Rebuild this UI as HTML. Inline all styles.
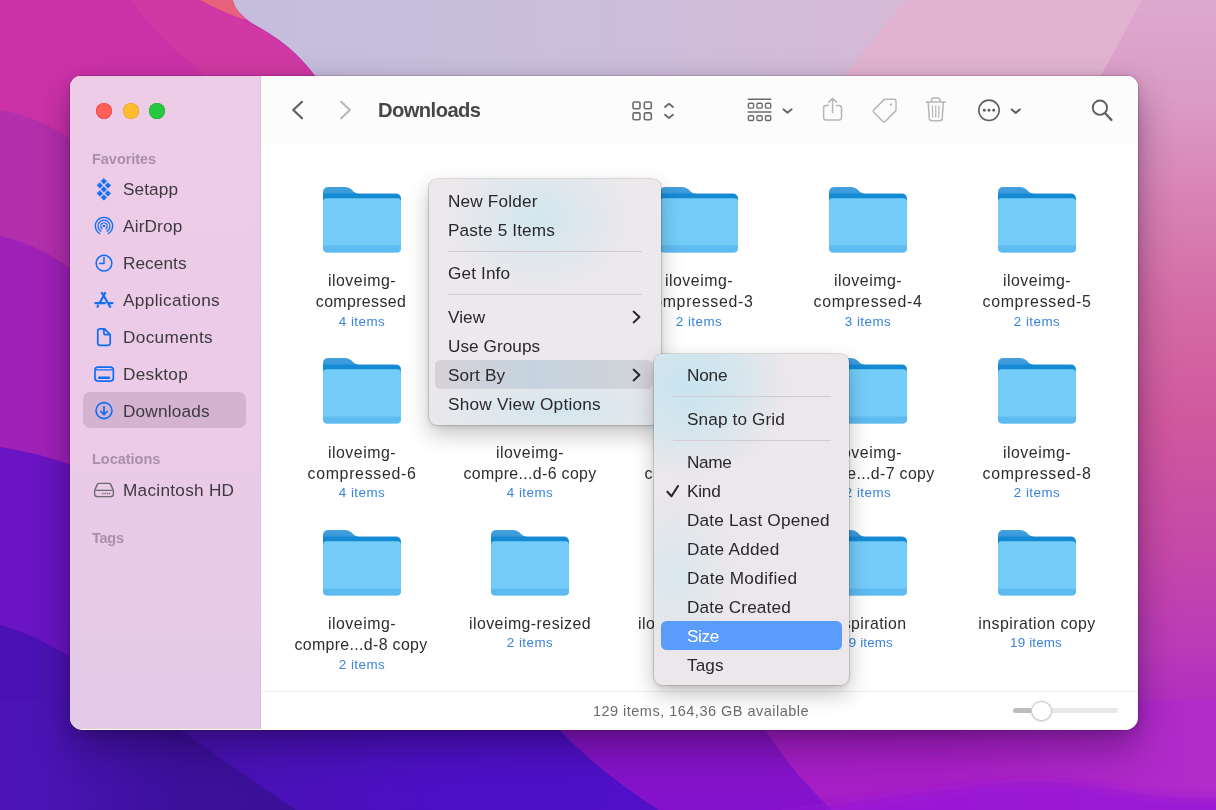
<!DOCTYPE html>
<html><head><meta charset="utf-8"><title>Downloads</title>
<style>
html,body{margin:0;padding:0;width:1216px;height:810px;overflow:hidden}
body{width:1216px;height:810px;overflow:hidden;position:relative;background:#8a1fb5;font-family:"Liberation Sans", sans-serif}
.t{position:absolute;white-space:nowrap;font-family:"Liberation Sans", sans-serif;will-change:transform}
.abs{position:absolute}
svg{position:absolute;overflow:visible}
</style></head><body>
<svg style="left:0;top:0;overflow:hidden" width="1216" height="810" viewBox="0 0 1216 810">
<defs>
<linearGradient id="gR" x1="0" y1="0" x2="0" y2="1">
<stop offset="0" stop-color="#dda9ce"/><stop offset=".12" stop-color="#db9cc6"/><stop offset=".25" stop-color="#d882b4"/><stop offset=".38" stop-color="#d46ba6"/><stop offset=".52" stop-color="#d0589e"/><stop offset=".68" stop-color="#c648a8"/><stop offset=".80" stop-color="#ba3ab8"/><stop offset=".90" stop-color="#ad28c4"/><stop offset="1" stop-color="#a41fca"/>
</linearGradient>
<linearGradient id="gLav" x1="0" y1="0" x2="1" y2="0"><stop offset="0" stop-color="#c4bddd"/><stop offset=".45" stop-color="#c9bfdc"/><stop offset="1" stop-color="#d6bad6"/></linearGradient>
<linearGradient id="gPur" x1="0" y1="0" x2="1" y2="0"><stop offset="0" stop-color="#a21cc4"/><stop offset=".6" stop-color="#a81fc6"/><stop offset="1" stop-color="#b22dca"/></linearGradient>
<linearGradient id="gVio" x1="0" y1="0" x2="0" y2="1"><stop offset="0" stop-color="#8a17b6"/><stop offset=".45" stop-color="#8614c6"/><stop offset="1" stop-color="#8412cc"/></linearGradient>
<linearGradient id="gInd" x1="0" y1="0" x2="1" y2="0"><stop offset="0" stop-color="#4c14b6"/><stop offset=".3" stop-color="#4812b2"/><stop offset=".6" stop-color="#4c10c4"/><stop offset="1" stop-color="#5010c8"/></linearGradient>
<linearGradient id="gDk" x1="0" y1="0" x2="1" y2="0"><stop offset="0" stop-color="#3a1098" stop-opacity="0"/><stop offset=".55" stop-color="#3a1098" stop-opacity=".9"/><stop offset="1" stop-color="#3a1098"/></linearGradient>
<filter id="bl" x="-10%" y="-50%" width="120%" height="200%"><feGaussianBlur stdDeviation="5"/></filter>
</defs>
<rect width="1216" height="810" fill="url(#gR)"/>
<path d="M906 0H1142L1101 76L1040 200H760L844 76Z" fill="#e1b3d1"/>
<path d="M225 0H906L844 76L760 200H330L316 76Z" fill="url(#gLav)"/>
<path d="M0 0H232Q236 12 250 22Q280 38 296 54Q310 68 318 80L340 200H0Z" fill="#cc32a8"/>
<path d="M200 0H233Q236 12 246 20Q226 14 200 0Z" fill="#e9627c"/>
<path d="M130 0H200Q236 18 262 30Q292 48 318 80L330 140H250Q215 78 178 52Q150 26 130 0Z" fill="#d4409e" opacity=".55"/>
<path d="M0 110Q40 116 80 146L120 180V320H0Z" fill="#b42fac"/>
<path d="M0 236Q40 244 80 276L120 300V500H0Z" fill="#a021b8"/>
<path d="M0 447Q36 452 80 468L120 480V700H0Z" fill="#6a14c3"/>
<path d="M0 625Q40 636 80 664L130 700V810H0Z" fill="#4a12b4"/>
<!-- bottom -->
<rect x="0" y="700" width="700" height="110" fill="url(#gInd)"/>
<path d="M40 700H140L178 729L296 810H40Z" fill="url(#gDk)"/>
<path d="M540 700L559 729Q600 772 659 810H1216V700Z" fill="url(#gPur)"/>
<path d="M540 700L559 729Q600 772 659 810H832Q790 770 765 729L750 700Z" fill="url(#gVio)"/>
<path d="M680 830Q860 798 1000 783Q1060 779 1120 790Q1170 800 1240 796V830Z" fill="#9612d8" opacity=".8" filter="url(#bl)"/>
</svg>
<div class="abs" style="left:70px;top:76px;width:1068px;height:653.5px;border-radius:11px 11px 12.5px 12.5px;box-shadow:0 16px 36px rgba(20,0,40,.38),0 2px 10px rgba(20,0,40,.13),0 0 0 .5px rgba(60,0,60,.3)"></div>
<div class="abs" id="win" style="left:70px;top:76px;width:1068px;height:653.5px;border-radius:11px 11px 12.5px 12.5px;overflow:hidden;background:#fff">
 <div class="abs" style="left:0;top:0;width:190.5px;height:653px;background:linear-gradient(180deg,#eccce7 0%,#ebcbe7 55%,#e3cae6 100%);border-right:1px solid #dcc3dc;box-sizing:border-box"></div>
 <div class="abs" style="left:190.5px;top:0;width:877.5px;height:68.6px;background:#fdfcfd"></div>
 <div class="abs" style="left:190.5px;top:615px;width:877.5px;height:1px;background:#efefef"></div>
 <div class="abs" style="left:13.3px;top:316px;width:163px;height:36.2px;border-radius:7px;background:#d4b3d1"></div>
</div>
<div class="abs" style="left:96.3px;top:102.7px;width:16px;height:16px;border-radius:50%;background:#fe5f57;box-shadow:inset 0 0 0 .5px #e2463f"></div>
<div class="abs" style="left:122.7px;top:102.7px;width:16px;height:16px;border-radius:50%;background:#febc2e;box-shadow:inset 0 0 0 .5px #dfa023"></div>
<div class="abs" style="left:149.0px;top:102.7px;width:16px;height:16px;border-radius:50%;background:#28c840;box-shadow:inset 0 0 0 .5px #1dad2b"></div>
<svg style="left:0;top:0" width="1216" height="810" viewBox="0 0 1216 810" fill="none" stroke-linecap="round" stroke-linejoin="round">
<!-- sidebar icons -->
<g fill="#0f6ef6" stroke="none">
<path d="M103.90 178.55l2.75 2.75-2.75 2.75-2.75-2.75zM99.85 182.65l2.75 2.75-2.75 2.75-2.75-2.75zM107.95 182.65l2.75 2.75-2.75 2.75-2.75-2.75zM103.90 186.65l2.75 2.75-2.75 2.75-2.75-2.75zM99.85 190.70l2.75 2.75-2.75 2.75-2.75-2.75zM107.95 190.70l2.75 2.75-2.75 2.75-2.75-2.75zM103.90 194.75l2.75 2.75-2.75 2.75-2.75-2.75z" stroke="#0f6ef6" stroke-width=".5" stroke-linejoin="round"/>
<circle cx="104" cy="226" r="1.2"/>
</g>
<g stroke="#0f6ef6" stroke-width="1.5">
<path d="M99.67 233.49A8.65 8.65 0 1 1 108.33 233.49" stroke-width="1.35"/>
<path d="M101.02 231.15A5.95 5.95 0 1 1 106.98 231.15" stroke-width="1.3"/><path d="M102.14 228.66A3.25 3.25 0 1 1 105.86 228.66" stroke-width="1.2"/>
<circle cx="104" cy="263.2" r="7.85"/>
<path d="M104 257.6V263.6H99.6"/>
<g stroke-width="2.1"><path d="M105.1 292.9L99.9 302.4M98.1 305.7L97.5 306.8M101.9 292.9L110.2 306.9M95.4 303.1H105M108.4 303.1H112.5"/></g>
<path d="M100 328.9H104.6L110.2 334.6V343.1Q110.2 345.35 108 345.35H100Q97.75 345.35 97.75 343.1V331.1Q97.75 328.9 100 328.9ZM103.9 329.1V332.9Q103.9 334.7 105.7 334.7H110" stroke-width="1.7"/>
<rect x="95" y="367.05" width="18.35" height="14.05" rx="3" stroke-width="1.7"/>
<path d="M95.4 369.9H113" stroke-width="1.2"/>
<path d="M99.1 377.8H109" stroke-width="2.4"/>
<circle cx="104" cy="410.6" r="8" stroke-width="1.6"/>
<path d="M104 406.6V414.3M100.9 411.5L104 414.6L107.1 411.5" stroke-width="1.7"/>
</g>
<g stroke="#6e6a72" stroke-width="1.4">
<path d="M98.9 483.4H109.1Q110.2 483.4 110.7 484.4L113 489.6Q113.4 490.6 113.4 491.6V493.8Q113.4 496.6 110.6 496.6H97.4Q94.6 496.6 94.6 493.8V491.6Q94.6 490.6 95 489.6L97.3 484.4Q97.8 483.4 98.9 483.4Z"/>
<path d="M96 490.3H112" stroke-width="1.3"/>
<g fill="#6e6a72" stroke="none"><circle cx="102.9" cy="493.6" r=".8"/><circle cx="105.1" cy="493.6" r=".8"/><circle cx="107.3" cy="493.6" r=".8"/><circle cx="109.5" cy="493.6" r=".8"/></g>
</g>
<!-- toolbar: nav chevrons -->
<path d="M302 101.8L293.3 110.05L302 118.3" stroke="#615d63" stroke-width="2.2"/>
<path d="M341.2 101.8L349.9 110.05L341.2 118.3" stroke="#b9b7ba" stroke-width="2.2"/>
<!-- grid view -->
<g stroke="#6d696f" stroke-width="1.6">
<rect x="633" y="102" width="7" height="6.8" rx="1.5"/><rect x="644.3" y="102" width="7" height="6.8" rx="1.5"/>
<rect x="633" y="112.9" width="7" height="6.8" rx="1.5"/><rect x="644.3" y="112.9" width="7" height="6.8" rx="1.5"/>
<path d="M665 107L669 103.8L673 107M665 114.8L669 118L673 114.8" stroke-width="1.9"/>
</g>
<!-- group -->
<g stroke="#6d696f" stroke-width="1.4">
<path d="M748.3 99.2H770.8M748.3 112H770.8" stroke-width="1.5"/>
<rect x="748.4" y="103.3" width="5.2" height="4.8" rx="1.2"/><rect x="756.95" y="103.3" width="5.2" height="4.8" rx="1.2"/><rect x="765.5" y="103.3" width="5.2" height="4.8" rx="1.2"/>
<rect x="748.4" y="115.7" width="5.2" height="4.8" rx="1.2"/><rect x="756.95" y="115.7" width="5.2" height="4.8" rx="1.2"/><rect x="765.5" y="115.7" width="5.2" height="4.8" rx="1.2"/>
<path d="M783.4 109.3L787.5 112.8L791.6 109.3" stroke-width="2"/>
</g>
<!-- share / tag / trash (disabled) -->
<g stroke="#b7b5b8" stroke-width="1.5">
<path d="M828.6 105.4H826Q823.6 105.4 823.6 107.8V117.5Q823.6 119.9 826 119.9H839.1Q841.5 119.9 841.5 117.5V107.8Q841.5 105.4 839.1 105.4H836.5"/>
<path d="M832.55 98.7V112.6M828.8 102.1L832.55 98.4L836.3 102.1"/>
<path d="M885.6 99.2H894Q896 99.2 896 101.2V109.4Q896 110.6 895.2 111.4L885.4 121.2Q884 122.6 882.6 121.2L873.9 112.5Q872.5 111.1 873.9 109.7L883.8 99.9Q884.5 99.2 885.6 99.2Z"/>
<circle cx="891" cy="104.6" r="1.2" fill="#b7b5b8" stroke="none"/>
<path d="M926.2 102H945.3M931.6 101.8V100Q931.6 98.1 933.5 98.1H938Q939.9 98.1 939.9 100V101.8"/>
<path d="M928.2 102.3L929.3 118.6Q929.5 120.7 931.6 120.7H939.9Q942 120.7 942.2 118.6L943.3 102.3"/>
<path d="M932.4 105.8L932.8 117.2M935.75 105.8V117.2M939.1 105.8L938.7 117.2" stroke-width="1.2"/>
</g>
<!-- more -->
<g stroke="#615d63" stroke-width="1.6">
<circle cx="989" cy="110.3" r="10.2"/>
<g fill="#615d63" stroke="none"><circle cx="984.3" cy="110.3" r="1.45"/><circle cx="989" cy="110.3" r="1.45"/><circle cx="993.7" cy="110.3" r="1.45"/></g>
<path d="M1011.8 109.4L1015.75 112.9L1019.7 109.4" stroke-width="2"/>
<circle cx="1099.9" cy="107.7" r="7.15" stroke-width="1.9"/>
<path d="M1105.2 113.2L1111.4 119.9" stroke-width="2.3"/>
</g>
</svg>
<div class="t" style="left:91.90px;top:147.00px;font-size:14.50px;line-height:24.00px;color:#a98fab;font-weight:700;"><span id="t1" style="letter-spacing:-0.036px">Favorites</span></div>
<div class="t" style="left:123.30px;top:177.00px;font-size:17.20px;line-height:24.00px;color:#3d3a3f;font-weight:400;"><span id="t2" style="letter-spacing:0.103px">Setapp</span></div>
<div class="t" style="left:123.30px;top:214.00px;font-size:17.20px;line-height:24.00px;color:#3d3a3f;font-weight:400;"><span id="t3" style="letter-spacing:0.172px">AirDrop</span></div>
<div class="t" style="left:123.30px;top:251.00px;font-size:17.20px;line-height:24.00px;color:#3d3a3f;font-weight:400;"><span id="t4" style="letter-spacing:0.073px">Recents</span></div>
<div class="t" style="left:123.30px;top:288.00px;font-size:17.20px;line-height:24.00px;color:#3d3a3f;font-weight:400;"><span id="t5" style="letter-spacing:0.365px">Applications</span></div>
<div class="t" style="left:123.30px;top:325.00px;font-size:17.20px;line-height:24.00px;color:#3d3a3f;font-weight:400;"><span id="t6" style="letter-spacing:0.345px">Documents</span></div>
<div class="t" style="left:123.30px;top:362.00px;font-size:17.20px;line-height:24.00px;color:#3d3a3f;font-weight:400;"><span id="t7" style="letter-spacing:0.273px">Desktop</span></div>
<div class="t" style="left:123.30px;top:399.00px;font-size:17.20px;line-height:24.00px;color:#3d3a3f;font-weight:400;"><span id="t8" style="letter-spacing:0.184px">Downloads</span></div>
<div class="t" style="left:91.90px;top:447.00px;font-size:14.50px;line-height:24.00px;color:#a98fab;font-weight:700;"><span id="t9" style="letter-spacing:-0.023px">Locations</span></div>
<div class="t" style="left:123.30px;top:478.00px;font-size:17.20px;line-height:24.00px;color:#3d3a3f;font-weight:400;"><span id="t10" style="letter-spacing:0.278px">Macintosh HD</span></div>
<div class="t" style="left:91.90px;top:526.00px;font-size:14.50px;line-height:24.00px;color:#a98fab;font-weight:700;"><span id="t11" style="letter-spacing:-0.260px">Tags</span></div>
<div class="t" style="left:378.00px;top:98.00px;font-size:20.20px;line-height:24.00px;color:#474548;font-weight:700;"><span id="t12" style="letter-spacing:-0.584px">Downloads</span></div>
<svg style="left:322.5px;top:186.7px" width="78" height="66" viewBox="0 0 78 66">
<defs><linearGradient id="fb1" x1="0" y1="0" x2="0" y2="1"><stop offset="0" stop-color="#45a1dd"/><stop offset=".19" stop-color="#3a99da"/><stop offset=".25" stop-color="#1489d4"/><stop offset="1" stop-color="#0f86d2"/></linearGradient></defs>
<path d="M0 5.5Q0 0 5.5 0H22.5Q26 0 28.6 2.6L30.2 4.2Q32.4 6.4 36 6.4H72.5Q78 6.4 78 11.9V30H0Z" fill="url(#fb1)"/>
<path d="M0 14.8Q0 11.3 3.5 11.3H74.5Q78 11.3 78 14.8V61Q78 65.6 73.4 65.6H4.6Q0 65.6 0 61Z" fill="#74cdf9"/>
<path d="M0 58.6H78V61Q78 65.6 73.4 65.6H4.6Q0 65.6 0 61Z" fill="#5ebbf1"/>
<rect x="0" y="58.3" width="78" height=".7" fill="#6cc4f4"/>
</svg>
<div class="t" style="left:241.55px;width:240px;text-align:center;top:269.00px;font-size:15.90px;line-height:24.00px;color:#2e2c2f;font-weight:400;"><span id="t13" style="letter-spacing:0.503px">iloveimg-</span></div>
<div class="t" style="left:241.49px;width:240px;text-align:center;top:290.00px;font-size:15.90px;line-height:24.00px;color:#2e2c2f;font-weight:400;"><span id="t14" style="letter-spacing:0.382px">compressed</span></div>
<div class="t" style="left:241.54px;width:240px;text-align:center;top:310.00px;font-size:13.40px;line-height:24.00px;color:#3a83da;font-weight:400;"><span id="t15" style="letter-spacing:0.471px">4 items</span></div>
<svg style="left:491.2px;top:186.7px" width="78" height="66" viewBox="0 0 78 66">
<defs><linearGradient id="fb2" x1="0" y1="0" x2="0" y2="1"><stop offset="0" stop-color="#45a1dd"/><stop offset=".19" stop-color="#3a99da"/><stop offset=".25" stop-color="#1489d4"/><stop offset="1" stop-color="#0f86d2"/></linearGradient></defs>
<path d="M0 5.5Q0 0 5.5 0H22.5Q26 0 28.6 2.6L30.2 4.2Q32.4 6.4 36 6.4H72.5Q78 6.4 78 11.9V30H0Z" fill="url(#fb2)"/>
<path d="M0 14.8Q0 11.3 3.5 11.3H74.5Q78 11.3 78 14.8V61Q78 65.6 73.4 65.6H4.6Q0 65.6 0 61Z" fill="#74cdf9"/>
<path d="M0 58.6H78V61Q78 65.6 73.4 65.6H4.6Q0 65.6 0 61Z" fill="#5ebbf1"/>
<rect x="0" y="58.3" width="78" height=".7" fill="#6cc4f4"/>
</svg>
<div class="t" style="left:410.25px;width:240px;text-align:center;top:269.00px;font-size:15.90px;line-height:24.00px;color:#2e2c2f;font-weight:400;"><span id="t16" style="letter-spacing:0.503px">iloveimg-</span></div>
<div class="t" style="left:410.34px;width:240px;text-align:center;top:290.00px;font-size:15.90px;line-height:24.00px;color:#2e2c2f;font-weight:400;"><span id="t17" style="letter-spacing:0.683px">compressed-2</span></div>
<div class="t" style="left:410.24px;width:240px;text-align:center;top:310.00px;font-size:13.40px;line-height:24.00px;color:#3a83da;font-weight:400;"><span id="t18" style="letter-spacing:0.471px">3 items</span></div>
<svg style="left:659.8px;top:186.7px" width="78" height="66" viewBox="0 0 78 66">
<defs><linearGradient id="fb3" x1="0" y1="0" x2="0" y2="1"><stop offset="0" stop-color="#45a1dd"/><stop offset=".19" stop-color="#3a99da"/><stop offset=".25" stop-color="#1489d4"/><stop offset="1" stop-color="#0f86d2"/></linearGradient></defs>
<path d="M0 5.5Q0 0 5.5 0H22.5Q26 0 28.6 2.6L30.2 4.2Q32.4 6.4 36 6.4H72.5Q78 6.4 78 11.9V30H0Z" fill="url(#fb3)"/>
<path d="M0 14.8Q0 11.3 3.5 11.3H74.5Q78 11.3 78 14.8V61Q78 65.6 73.4 65.6H4.6Q0 65.6 0 61Z" fill="#74cdf9"/>
<path d="M0 58.6H78V61Q78 65.6 73.4 65.6H4.6Q0 65.6 0 61Z" fill="#5ebbf1"/>
<rect x="0" y="58.3" width="78" height=".7" fill="#6cc4f4"/>
</svg>
<div class="t" style="left:578.85px;width:240px;text-align:center;top:269.00px;font-size:15.90px;line-height:24.00px;color:#2e2c2f;font-weight:400;"><span id="t19" style="letter-spacing:0.503px">iloveimg-</span></div>
<div class="t" style="left:578.94px;width:240px;text-align:center;top:290.00px;font-size:15.90px;line-height:24.00px;color:#2e2c2f;font-weight:400;"><span id="t20" style="letter-spacing:0.683px">compressed-3</span></div>
<div class="t" style="left:578.84px;width:240px;text-align:center;top:310.00px;font-size:13.40px;line-height:24.00px;color:#3a83da;font-weight:400;"><span id="t21" style="letter-spacing:0.471px">2 items</span></div>
<svg style="left:828.6px;top:186.7px" width="78" height="66" viewBox="0 0 78 66">
<defs><linearGradient id="fb4" x1="0" y1="0" x2="0" y2="1"><stop offset="0" stop-color="#45a1dd"/><stop offset=".19" stop-color="#3a99da"/><stop offset=".25" stop-color="#1489d4"/><stop offset="1" stop-color="#0f86d2"/></linearGradient></defs>
<path d="M0 5.5Q0 0 5.5 0H22.5Q26 0 28.6 2.6L30.2 4.2Q32.4 6.4 36 6.4H72.5Q78 6.4 78 11.9V30H0Z" fill="url(#fb4)"/>
<path d="M0 14.8Q0 11.3 3.5 11.3H74.5Q78 11.3 78 14.8V61Q78 65.6 73.4 65.6H4.6Q0 65.6 0 61Z" fill="#74cdf9"/>
<path d="M0 58.6H78V61Q78 65.6 73.4 65.6H4.6Q0 65.6 0 61Z" fill="#5ebbf1"/>
<rect x="0" y="58.3" width="78" height=".7" fill="#6cc4f4"/>
</svg>
<div class="t" style="left:747.65px;width:240px;text-align:center;top:269.00px;font-size:15.90px;line-height:24.00px;color:#2e2c2f;font-weight:400;"><span id="t22" style="letter-spacing:0.503px">iloveimg-</span></div>
<div class="t" style="left:747.74px;width:240px;text-align:center;top:290.00px;font-size:15.90px;line-height:24.00px;color:#2e2c2f;font-weight:400;"><span id="t23" style="letter-spacing:0.683px">compressed-4</span></div>
<div class="t" style="left:747.64px;width:240px;text-align:center;top:310.00px;font-size:13.40px;line-height:24.00px;color:#3a83da;font-weight:400;"><span id="t24" style="letter-spacing:0.471px">3 items</span></div>
<svg style="left:997.5px;top:186.7px" width="78" height="66" viewBox="0 0 78 66">
<defs><linearGradient id="fb5" x1="0" y1="0" x2="0" y2="1"><stop offset="0" stop-color="#45a1dd"/><stop offset=".19" stop-color="#3a99da"/><stop offset=".25" stop-color="#1489d4"/><stop offset="1" stop-color="#0f86d2"/></linearGradient></defs>
<path d="M0 5.5Q0 0 5.5 0H22.5Q26 0 28.6 2.6L30.2 4.2Q32.4 6.4 36 6.4H72.5Q78 6.4 78 11.9V30H0Z" fill="url(#fb5)"/>
<path d="M0 14.8Q0 11.3 3.5 11.3H74.5Q78 11.3 78 14.8V61Q78 65.6 73.4 65.6H4.6Q0 65.6 0 61Z" fill="#74cdf9"/>
<path d="M0 58.6H78V61Q78 65.6 73.4 65.6H4.6Q0 65.6 0 61Z" fill="#5ebbf1"/>
<rect x="0" y="58.3" width="78" height=".7" fill="#6cc4f4"/>
</svg>
<div class="t" style="left:916.55px;width:240px;text-align:center;top:269.00px;font-size:15.90px;line-height:24.00px;color:#2e2c2f;font-weight:400;"><span id="t25" style="letter-spacing:0.503px">iloveimg-</span></div>
<div class="t" style="left:916.64px;width:240px;text-align:center;top:290.00px;font-size:15.90px;line-height:24.00px;color:#2e2c2f;font-weight:400;"><span id="t26" style="letter-spacing:0.683px">compressed-5</span></div>
<div class="t" style="left:916.54px;width:240px;text-align:center;top:310.00px;font-size:13.40px;line-height:24.00px;color:#3a83da;font-weight:400;"><span id="t27" style="letter-spacing:0.471px">2 items</span></div>
<svg style="left:322.5px;top:358.4px" width="78" height="66" viewBox="0 0 78 66">
<defs><linearGradient id="fb6" x1="0" y1="0" x2="0" y2="1"><stop offset="0" stop-color="#45a1dd"/><stop offset=".19" stop-color="#3a99da"/><stop offset=".25" stop-color="#1489d4"/><stop offset="1" stop-color="#0f86d2"/></linearGradient></defs>
<path d="M0 5.5Q0 0 5.5 0H22.5Q26 0 28.6 2.6L30.2 4.2Q32.4 6.4 36 6.4H72.5Q78 6.4 78 11.9V30H0Z" fill="url(#fb6)"/>
<path d="M0 14.8Q0 11.3 3.5 11.3H74.5Q78 11.3 78 14.8V61Q78 65.6 73.4 65.6H4.6Q0 65.6 0 61Z" fill="#74cdf9"/>
<path d="M0 58.6H78V61Q78 65.6 73.4 65.6H4.6Q0 65.6 0 61Z" fill="#5ebbf1"/>
<rect x="0" y="58.3" width="78" height=".7" fill="#6cc4f4"/>
</svg>
<div class="t" style="left:241.55px;width:240px;text-align:center;top:441.00px;font-size:15.90px;line-height:24.00px;color:#2e2c2f;font-weight:400;"><span id="t28" style="letter-spacing:0.503px">iloveimg-</span></div>
<div class="t" style="left:241.64px;width:240px;text-align:center;top:462.00px;font-size:15.90px;line-height:24.00px;color:#2e2c2f;font-weight:400;"><span id="t29" style="letter-spacing:0.683px">compressed-6</span></div>
<div class="t" style="left:241.54px;width:240px;text-align:center;top:481.00px;font-size:13.40px;line-height:24.00px;color:#3a83da;font-weight:400;"><span id="t30" style="letter-spacing:0.471px">4 items</span></div>
<svg style="left:491.2px;top:358.4px" width="78" height="66" viewBox="0 0 78 66">
<defs><linearGradient id="fb7" x1="0" y1="0" x2="0" y2="1"><stop offset="0" stop-color="#45a1dd"/><stop offset=".19" stop-color="#3a99da"/><stop offset=".25" stop-color="#1489d4"/><stop offset="1" stop-color="#0f86d2"/></linearGradient></defs>
<path d="M0 5.5Q0 0 5.5 0H22.5Q26 0 28.6 2.6L30.2 4.2Q32.4 6.4 36 6.4H72.5Q78 6.4 78 11.9V30H0Z" fill="url(#fb7)"/>
<path d="M0 14.8Q0 11.3 3.5 11.3H74.5Q78 11.3 78 14.8V61Q78 65.6 73.4 65.6H4.6Q0 65.6 0 61Z" fill="#74cdf9"/>
<path d="M0 58.6H78V61Q78 65.6 73.4 65.6H4.6Q0 65.6 0 61Z" fill="#5ebbf1"/>
<rect x="0" y="58.3" width="78" height=".7" fill="#6cc4f4"/>
</svg>
<div class="t" style="left:410.25px;width:240px;text-align:center;top:441.00px;font-size:15.90px;line-height:24.00px;color:#2e2c2f;font-weight:400;"><span id="t31" style="letter-spacing:0.503px">iloveimg-</span></div>
<div class="t" style="left:410.18px;width:240px;text-align:center;top:462.00px;font-size:15.90px;line-height:24.00px;color:#2e2c2f;font-weight:400;"><span id="t32" style="letter-spacing:0.351px">compre...d-6 copy</span></div>
<div class="t" style="left:410.24px;width:240px;text-align:center;top:481.00px;font-size:13.40px;line-height:24.00px;color:#3a83da;font-weight:400;"><span id="t33" style="letter-spacing:0.471px">4 items</span></div>
<svg style="left:659.8px;top:358.4px" width="78" height="66" viewBox="0 0 78 66">
<defs><linearGradient id="fb8" x1="0" y1="0" x2="0" y2="1"><stop offset="0" stop-color="#45a1dd"/><stop offset=".19" stop-color="#3a99da"/><stop offset=".25" stop-color="#1489d4"/><stop offset="1" stop-color="#0f86d2"/></linearGradient></defs>
<path d="M0 5.5Q0 0 5.5 0H22.5Q26 0 28.6 2.6L30.2 4.2Q32.4 6.4 36 6.4H72.5Q78 6.4 78 11.9V30H0Z" fill="url(#fb8)"/>
<path d="M0 14.8Q0 11.3 3.5 11.3H74.5Q78 11.3 78 14.8V61Q78 65.6 73.4 65.6H4.6Q0 65.6 0 61Z" fill="#74cdf9"/>
<path d="M0 58.6H78V61Q78 65.6 73.4 65.6H4.6Q0 65.6 0 61Z" fill="#5ebbf1"/>
<rect x="0" y="58.3" width="78" height=".7" fill="#6cc4f4"/>
</svg>
<div class="t" style="left:578.85px;width:240px;text-align:center;top:441.00px;font-size:15.90px;line-height:24.00px;color:#2e2c2f;font-weight:400;"><span id="t34" style="letter-spacing:0.503px">iloveimg-</span></div>
<div class="t" style="left:578.94px;width:240px;text-align:center;top:462.00px;font-size:15.90px;line-height:24.00px;color:#2e2c2f;font-weight:400;"><span id="t35" style="letter-spacing:0.683px">compressed-7</span></div>
<div class="t" style="left:578.84px;width:240px;text-align:center;top:481.00px;font-size:13.40px;line-height:24.00px;color:#3a83da;font-weight:400;"><span id="t36" style="letter-spacing:0.471px">2 items</span></div>
<svg style="left:828.6px;top:358.4px" width="78" height="66" viewBox="0 0 78 66">
<defs><linearGradient id="fb9" x1="0" y1="0" x2="0" y2="1"><stop offset="0" stop-color="#45a1dd"/><stop offset=".19" stop-color="#3a99da"/><stop offset=".25" stop-color="#1489d4"/><stop offset="1" stop-color="#0f86d2"/></linearGradient></defs>
<path d="M0 5.5Q0 0 5.5 0H22.5Q26 0 28.6 2.6L30.2 4.2Q32.4 6.4 36 6.4H72.5Q78 6.4 78 11.9V30H0Z" fill="url(#fb9)"/>
<path d="M0 14.8Q0 11.3 3.5 11.3H74.5Q78 11.3 78 14.8V61Q78 65.6 73.4 65.6H4.6Q0 65.6 0 61Z" fill="#74cdf9"/>
<path d="M0 58.6H78V61Q78 65.6 73.4 65.6H4.6Q0 65.6 0 61Z" fill="#5ebbf1"/>
<rect x="0" y="58.3" width="78" height=".7" fill="#6cc4f4"/>
</svg>
<div class="t" style="left:747.65px;width:240px;text-align:center;top:441.00px;font-size:15.90px;line-height:24.00px;color:#2e2c2f;font-weight:400;"><span id="t37" style="letter-spacing:0.503px">iloveimg-</span></div>
<div class="t" style="left:747.58px;width:240px;text-align:center;top:462.00px;font-size:15.90px;line-height:24.00px;color:#2e2c2f;font-weight:400;"><span id="t38" style="letter-spacing:0.351px">compre...d-7 copy</span></div>
<div class="t" style="left:747.64px;width:240px;text-align:center;top:481.00px;font-size:13.40px;line-height:24.00px;color:#3a83da;font-weight:400;"><span id="t39" style="letter-spacing:0.471px">2 items</span></div>
<svg style="left:997.5px;top:358.4px" width="78" height="66" viewBox="0 0 78 66">
<defs><linearGradient id="fb10" x1="0" y1="0" x2="0" y2="1"><stop offset="0" stop-color="#45a1dd"/><stop offset=".19" stop-color="#3a99da"/><stop offset=".25" stop-color="#1489d4"/><stop offset="1" stop-color="#0f86d2"/></linearGradient></defs>
<path d="M0 5.5Q0 0 5.5 0H22.5Q26 0 28.6 2.6L30.2 4.2Q32.4 6.4 36 6.4H72.5Q78 6.4 78 11.9V30H0Z" fill="url(#fb10)"/>
<path d="M0 14.8Q0 11.3 3.5 11.3H74.5Q78 11.3 78 14.8V61Q78 65.6 73.4 65.6H4.6Q0 65.6 0 61Z" fill="#74cdf9"/>
<path d="M0 58.6H78V61Q78 65.6 73.4 65.6H4.6Q0 65.6 0 61Z" fill="#5ebbf1"/>
<rect x="0" y="58.3" width="78" height=".7" fill="#6cc4f4"/>
</svg>
<div class="t" style="left:916.55px;width:240px;text-align:center;top:441.00px;font-size:15.90px;line-height:24.00px;color:#2e2c2f;font-weight:400;"><span id="t40" style="letter-spacing:0.503px">iloveimg-</span></div>
<div class="t" style="left:916.64px;width:240px;text-align:center;top:462.00px;font-size:15.90px;line-height:24.00px;color:#2e2c2f;font-weight:400;"><span id="t41" style="letter-spacing:0.683px">compressed-8</span></div>
<div class="t" style="left:916.54px;width:240px;text-align:center;top:481.00px;font-size:13.40px;line-height:24.00px;color:#3a83da;font-weight:400;"><span id="t42" style="letter-spacing:0.471px">2 items</span></div>
<svg style="left:322.5px;top:530.1px" width="78" height="66" viewBox="0 0 78 66">
<defs><linearGradient id="fb11" x1="0" y1="0" x2="0" y2="1"><stop offset="0" stop-color="#45a1dd"/><stop offset=".19" stop-color="#3a99da"/><stop offset=".25" stop-color="#1489d4"/><stop offset="1" stop-color="#0f86d2"/></linearGradient></defs>
<path d="M0 5.5Q0 0 5.5 0H22.5Q26 0 28.6 2.6L30.2 4.2Q32.4 6.4 36 6.4H72.5Q78 6.4 78 11.9V30H0Z" fill="url(#fb11)"/>
<path d="M0 14.8Q0 11.3 3.5 11.3H74.5Q78 11.3 78 14.8V61Q78 65.6 73.4 65.6H4.6Q0 65.6 0 61Z" fill="#74cdf9"/>
<path d="M0 58.6H78V61Q78 65.6 73.4 65.6H4.6Q0 65.6 0 61Z" fill="#5ebbf1"/>
<rect x="0" y="58.3" width="78" height=".7" fill="#6cc4f4"/>
</svg>
<div class="t" style="left:241.55px;width:240px;text-align:center;top:612.00px;font-size:15.90px;line-height:24.00px;color:#2e2c2f;font-weight:400;"><span id="t43" style="letter-spacing:0.503px">iloveimg-</span></div>
<div class="t" style="left:241.48px;width:240px;text-align:center;top:633.00px;font-size:15.90px;line-height:24.00px;color:#2e2c2f;font-weight:400;"><span id="t44" style="letter-spacing:0.351px">compre...d-8 copy</span></div>
<div class="t" style="left:241.54px;width:240px;text-align:center;top:653.00px;font-size:13.40px;line-height:24.00px;color:#3a83da;font-weight:400;"><span id="t45" style="letter-spacing:0.471px">2 items</span></div>
<svg style="left:491.2px;top:530.1px" width="78" height="66" viewBox="0 0 78 66">
<defs><linearGradient id="fb12" x1="0" y1="0" x2="0" y2="1"><stop offset="0" stop-color="#45a1dd"/><stop offset=".19" stop-color="#3a99da"/><stop offset=".25" stop-color="#1489d4"/><stop offset="1" stop-color="#0f86d2"/></linearGradient></defs>
<path d="M0 5.5Q0 0 5.5 0H22.5Q26 0 28.6 2.6L30.2 4.2Q32.4 6.4 36 6.4H72.5Q78 6.4 78 11.9V30H0Z" fill="url(#fb12)"/>
<path d="M0 14.8Q0 11.3 3.5 11.3H74.5Q78 11.3 78 14.8V61Q78 65.6 73.4 65.6H4.6Q0 65.6 0 61Z" fill="#74cdf9"/>
<path d="M0 58.6H78V61Q78 65.6 73.4 65.6H4.6Q0 65.6 0 61Z" fill="#5ebbf1"/>
<rect x="0" y="58.3" width="78" height=".7" fill="#6cc4f4"/>
</svg>
<div class="t" style="left:410.23px;width:240px;text-align:center;top:612.00px;font-size:15.90px;line-height:24.00px;color:#2e2c2f;font-weight:400;"><span id="t46" style="letter-spacing:0.452px">iloveimg-resized</span></div>
<div class="t" style="left:410.24px;width:240px;text-align:center;top:631.00px;font-size:13.40px;line-height:24.00px;color:#3a83da;font-weight:400;"><span id="t47" style="letter-spacing:0.471px">2 items</span></div>
<svg style="left:659.8px;top:530.1px" width="78" height="66" viewBox="0 0 78 66">
<defs><linearGradient id="fb13" x1="0" y1="0" x2="0" y2="1"><stop offset="0" stop-color="#45a1dd"/><stop offset=".19" stop-color="#3a99da"/><stop offset=".25" stop-color="#1489d4"/><stop offset="1" stop-color="#0f86d2"/></linearGradient></defs>
<path d="M0 5.5Q0 0 5.5 0H22.5Q26 0 28.6 2.6L30.2 4.2Q32.4 6.4 36 6.4H72.5Q78 6.4 78 11.9V30H0Z" fill="url(#fb13)"/>
<path d="M0 14.8Q0 11.3 3.5 11.3H74.5Q78 11.3 78 14.8V61Q78 65.6 73.4 65.6H4.6Q0 65.6 0 61Z" fill="#74cdf9"/>
<path d="M0 58.6H78V61Q78 65.6 73.4 65.6H4.6Q0 65.6 0 61Z" fill="#5ebbf1"/>
<rect x="0" y="58.3" width="78" height=".7" fill="#6cc4f4"/>
</svg>
<div class="t" style="left:578.83px;width:240px;text-align:center;top:612.00px;font-size:15.90px;line-height:24.00px;color:#2e2c2f;font-weight:400;"><span id="t48" style="letter-spacing:0.452px">iloveimg-resized</span></div>
<div class="t" style="left:578.84px;width:240px;text-align:center;top:631.00px;font-size:13.40px;line-height:24.00px;color:#3a83da;font-weight:400;"><span id="t49" style="letter-spacing:0.471px">2 items</span></div>
<svg style="left:828.6px;top:530.1px" width="78" height="66" viewBox="0 0 78 66">
<defs><linearGradient id="fb14" x1="0" y1="0" x2="0" y2="1"><stop offset="0" stop-color="#45a1dd"/><stop offset=".19" stop-color="#3a99da"/><stop offset=".25" stop-color="#1489d4"/><stop offset="1" stop-color="#0f86d2"/></linearGradient></defs>
<path d="M0 5.5Q0 0 5.5 0H22.5Q26 0 28.6 2.6L30.2 4.2Q32.4 6.4 36 6.4H72.5Q78 6.4 78 11.9V30H0Z" fill="url(#fb14)"/>
<path d="M0 14.8Q0 11.3 3.5 11.3H74.5Q78 11.3 78 14.8V61Q78 65.6 73.4 65.6H4.6Q0 65.6 0 61Z" fill="#74cdf9"/>
<path d="M0 58.6H78V61Q78 65.6 73.4 65.6H4.6Q0 65.6 0 61Z" fill="#5ebbf1"/>
<rect x="0" y="58.3" width="78" height=".7" fill="#6cc4f4"/>
</svg>
<div class="t" style="left:747.60px;width:240px;text-align:center;top:612.00px;font-size:15.90px;line-height:24.00px;color:#2e2c2f;font-weight:400;"><span id="t50" style="letter-spacing:0.396px">inspiration</span></div>
<div class="t" style="left:747.48px;width:240px;text-align:center;top:631.00px;font-size:13.40px;line-height:24.00px;color:#3a83da;font-weight:400;"><span id="t51" style="letter-spacing:0.156px">19 items</span></div>
<svg style="left:997.5px;top:530.1px" width="78" height="66" viewBox="0 0 78 66">
<defs><linearGradient id="fb15" x1="0" y1="0" x2="0" y2="1"><stop offset="0" stop-color="#45a1dd"/><stop offset=".19" stop-color="#3a99da"/><stop offset=".25" stop-color="#1489d4"/><stop offset="1" stop-color="#0f86d2"/></linearGradient></defs>
<path d="M0 5.5Q0 0 5.5 0H22.5Q26 0 28.6 2.6L30.2 4.2Q32.4 6.4 36 6.4H72.5Q78 6.4 78 11.9V30H0Z" fill="url(#fb15)"/>
<path d="M0 14.8Q0 11.3 3.5 11.3H74.5Q78 11.3 78 14.8V61Q78 65.6 73.4 65.6H4.6Q0 65.6 0 61Z" fill="#74cdf9"/>
<path d="M0 58.6H78V61Q78 65.6 73.4 65.6H4.6Q0 65.6 0 61Z" fill="#5ebbf1"/>
<rect x="0" y="58.3" width="78" height=".7" fill="#6cc4f4"/>
</svg>
<div class="t" style="left:916.52px;width:240px;text-align:center;top:612.00px;font-size:15.90px;line-height:24.00px;color:#2e2c2f;font-weight:400;"><span id="t52" style="letter-spacing:0.439px">inspiration copy</span></div>
<div class="t" style="left:916.38px;width:240px;text-align:center;top:631.00px;font-size:13.40px;line-height:24.00px;color:#3a83da;font-weight:400;"><span id="t53" style="letter-spacing:0.156px">19 items</span></div>
<div class="t" style="left:580.64px;width:240px;text-align:center;top:699.00px;font-size:14.50px;line-height:24.00px;color:#6d6b6e;font-weight:400;"><span id="t54" style="letter-spacing:0.489px">129 items, 164,36 GB available</span></div>
<div class="abs" style="left:1013px;top:708.3px;width:105px;height:5px;border-radius:3px;background:#e9e9e9"></div>
<div class="abs" style="left:1013px;top:708.3px;width:25px;height:5px;border-radius:3px;background:#bdbdbd"></div>
<div class="abs" style="left:1031.2px;top:700.6px;width:20.4px;height:20.4px;border-radius:50%;background:#fff;box-shadow:inset 0 0 0 1px #c6c6c6,0 .5px 1.5px rgba(0,0,0,.18);box-sizing:border-box"></div>
<div class="abs" style="left:428.5px;top:179.3px;width:232.5px;height:245.4px;border-radius:8px;background:#ece8eb;box-shadow:0 0 0 .6px rgba(0,0,0,.22),0 9px 22px rgba(0,0,0,.24),0 2px 5px rgba(0,0,0,.10);overflow:hidden">
 <div class="abs" style="left:15px;top:-35px;width:190px;height:150px;background:radial-gradient(ellipse at center,rgba(203,230,240,.8) 0%,rgba(203,230,240,0) 70%)"></div>
 <div class="abs" style="left:-20px;top:190px;width:300px;height:80px;background:radial-gradient(ellipse at center,rgba(205,230,240,.8) 0%,rgba(205,230,240,0) 70%)"></div>
 <div class="abs" style="left:19.3px;top:72px;width:194.2px;height:1px;background:#d2c9d1"></div>
 <div class="abs" style="left:19.3px;top:115px;width:194.2px;height:1px;background:#d2c9d1"></div>
 <div class="abs" style="left:6.9px;top:181px;width:217.3px;height:28.8px;border-radius:5.5px;background:linear-gradient(90deg,#d5d2d7 0%,#c6d3df 45%,#d3d3d8 100%)"></div>
</div>
<div class="t" style="left:447.80px;top:189.00px;font-size:17.20px;line-height:24.00px;color:#2a282b;font-weight:400;"><span id="t55" style="letter-spacing:0.168px">New Folder</span></div>
<div class="t" style="left:447.80px;top:218.00px;font-size:17.20px;line-height:24.00px;color:#2a282b;font-weight:400;"><span id="t56" style="letter-spacing:0.151px">Paste 5 Items</span></div>
<div class="t" style="left:447.80px;top:261.00px;font-size:17.20px;line-height:24.00px;color:#2a282b;font-weight:400;"><span id="t57" style="letter-spacing:0.135px">Get Info</span></div>
<div class="t" style="left:447.80px;top:305.00px;font-size:17.20px;line-height:24.00px;color:#2a282b;font-weight:400;"><span id="t58" style="letter-spacing:0.049px">View</span></div>
<div class="t" style="left:447.80px;top:334.00px;font-size:17.20px;line-height:24.00px;color:#2a282b;font-weight:400;"><span id="t59" style="letter-spacing:0.044px">Use Groups</span></div>
<div class="t" style="left:447.80px;top:363.00px;font-size:17.20px;line-height:24.00px;color:#2a282b;font-weight:400;"><span id="t60" style="letter-spacing:0.123px">Sort By</span></div>
<div class="t" style="left:447.80px;top:392.00px;font-size:17.20px;line-height:24.00px;color:#2a282b;font-weight:400;"><span id="t61" style="letter-spacing:0.248px">Show View Options</span></div>
<svg style="left:630px;top:309.0px" width="14" height="16" viewBox="0 0 14 16"><path d="M3.6 2.6L9.4 8L3.6 13.4" fill="none" stroke="#2a282b" stroke-width="2" stroke-linecap="round" stroke-linejoin="round"/></svg>
<svg style="left:630px;top:367.0px" width="14" height="16" viewBox="0 0 14 16"><path d="M3.6 2.6L9.4 8L3.6 13.4" fill="none" stroke="#2a282b" stroke-width="2" stroke-linecap="round" stroke-linejoin="round"/></svg>
<div class="abs" style="left:653.8px;top:353.8px;width:195.1px;height:331.4px;border-radius:8px;background:#ebe7ea;box-shadow:0 0 0 .6px rgba(0,0,0,.22),0 9px 22px rgba(0,0,0,.24),0 2px 5px rgba(0,0,0,.10);overflow:hidden">
 <div class="abs" style="left:-66px;top:-58px;width:200px;height:180px;background:radial-gradient(ellipse at center,rgba(198,228,240,.95) 0%,rgba(198,228,240,.55) 38%,rgba(198,228,240,0) 70%)"></div>
 <div class="abs" style="left:-40px;top:140px;width:120px;height:160px;background:radial-gradient(ellipse at center,rgba(210,232,240,.7) 0%,rgba(210,232,240,0) 70%)"></div>
 <div class="abs" style="left:19px;top:42.5px;width:158px;height:1px;background:#d3cbd2"></div>
 <div class="abs" style="left:19px;top:86px;width:158px;height:1px;background:#d3cbd2"></div>
 <div class="abs" style="left:7.2px;top:267.7px;width:181.5px;height:28.5px;border-radius:5.5px;background:#5a9cfb"></div>
</div>
<div class="t" style="left:686.50px;top:363.00px;font-size:17.20px;line-height:24.00px;color:#2a282b;font-weight:400;"><span id="t62" style="letter-spacing:-0.198px">None</span></div>
<div class="t" style="left:686.50px;top:407.00px;font-size:17.20px;line-height:24.00px;color:#2a282b;font-weight:400;"><span id="t63" style="letter-spacing:0.118px">Snap to Grid</span></div>
<div class="t" style="left:686.50px;top:450.00px;font-size:17.20px;line-height:24.00px;color:#2a282b;font-weight:400;"><span id="t64" style="letter-spacing:-0.320px">Name</span></div>
<div class="t" style="left:686.50px;top:479.00px;font-size:17.20px;line-height:24.00px;color:#2a282b;font-weight:400;"><span id="t65" style="letter-spacing:-0.235px">Kind</span></div>
<div class="t" style="left:686.50px;top:508.00px;font-size:17.20px;line-height:24.00px;color:#2a282b;font-weight:400;"><span id="t66" style="letter-spacing:0.199px">Date Last Opened</span></div>
<div class="t" style="left:686.50px;top:537.00px;font-size:17.20px;line-height:24.00px;color:#2a282b;font-weight:400;"><span id="t67" style="letter-spacing:0.262px">Date Added</span></div>
<div class="t" style="left:686.50px;top:566.00px;font-size:17.20px;line-height:24.00px;color:#2a282b;font-weight:400;"><span id="t68" style="letter-spacing:0.329px">Date Modified</span></div>
<div class="t" style="left:686.50px;top:595.00px;font-size:17.20px;line-height:24.00px;color:#2a282b;font-weight:400;"><span id="t69" style="letter-spacing:0.133px">Date Created</span></div>
<div class="t" style="left:686.50px;top:624.00px;font-size:17.20px;line-height:24.00px;color:#ffffff;font-weight:400;"><span id="t70" style="letter-spacing:-0.346px">Size</span></div>
<div class="t" style="left:686.50px;top:653.00px;font-size:17.20px;line-height:24.00px;color:#2a282b;font-weight:400;"><span id="t71" style="letter-spacing:0.062px">Tags</span></div>
<svg style="left:665px;top:483px" width="16" height="16" viewBox="0 0 16 16"><path d="M2.4 8.7L6.5 13.2L13 3" fill="none" stroke="#2a282b" stroke-width="2.1" stroke-linecap="round" stroke-linejoin="round"/></svg>
</body></html>
